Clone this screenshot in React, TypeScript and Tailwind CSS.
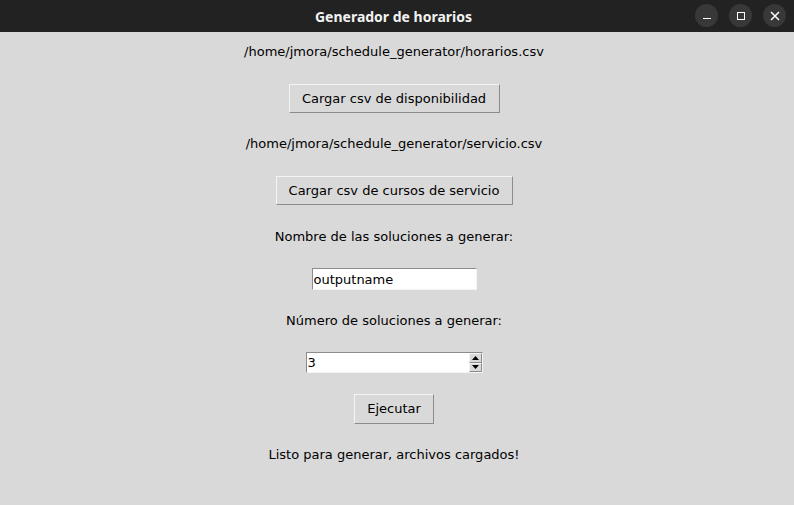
import { useState } from 'react';

const font = { fontFamily: '"DejaVu Sans", sans-serif' };

function TkButton({ label, width }: { label: string; width: string }) {
  return (
    <button
      type="button"
      className={`${width} h-[29px] border border-t-[#f4f4f4] border-l-[#f4f4f4] border-b-[#8c8c8c] border-r-[#8c8c8c] bg-[#d9d9d9] text-[13px] text-black`}
    >
      {label}
    </button>
  );
}

function Label({ text }: { text: string }) {
  return <p className="h-[20px] text-[13px] leading-[20px] text-black">{text}</p>;
}

export default function App() {
  const [name, setName] = useState('outputname');
  const [count, setCount] = useState(3);

  return (
    <div className="flex h-[505px] w-[794px] flex-col bg-[#d9d9d9]" style={font}>
      <div className="relative flex h-[32px] shrink-0 items-center justify-center bg-[#222222] pr-[7px]">
        <span
          className="text-[14px] font-bold text-[#f2f2f2]"
          style={{ fontFamily: '"Noto Sans", sans-serif' }}
        >
          Generador de horarios
        </span>
        <div className="absolute right-[8px] top-[4px] flex gap-[11px]">
          <div className="flex h-[23px] w-[23px] items-center justify-center rounded-full bg-[#383838]">
            <div className="mt-[6px] h-[1.5px] w-[8px] bg-white" />
          </div>
          <div className="flex h-[23px] w-[23px] items-center justify-center rounded-full bg-[#383838]">
            <div className="h-[8px] w-[8px] border border-white" />
          </div>
          <div className="flex h-[23px] w-[23px] items-center justify-center rounded-full bg-[#383838]">
            <svg width="10" height="10" viewBox="0 0 10 10">
              <path d="M1 1L9 9M9 1L1 9" stroke="white" strokeWidth="1.5" />
            </svg>
          </div>
        </div>
      </div>

      <div className="flex flex-col items-center pr-[6px]">
        <div className="mt-[10px]">
          <Label text="/home/jmora/schedule_generator/horarios.csv" />
        </div>
        <div className="mt-[22px]">
          <TkButton label="Cargar csv de disponibilidad" width="w-[211px]" />
        </div>
        <div className="mt-[21px]">
          <Label text="/home/jmora/schedule_generator/servicio.csv" />
        </div>
        <div className="mt-[22px]">
          <TkButton label="Cargar csv de cursos de servicio" width="w-[237px]" />
        </div>
        <div className="mt-[22px]">
          <Label text="Nombre de las soluciones a generar:" />
        </div>
        <input
          value={name}
          onChange={(e) => setName(e.target.value)}
          className="mt-[21px] h-[22px] w-[165px] border border-t-[#8c8c8c] border-l-[#8c8c8c] border-b-[#f4f4f4] border-r-[#f4f4f4] bg-white px-[1px] text-[13px] text-black outline-none"
        />
        <div className="mt-[21px]">
          <Label text="Número de soluciones a generar:" />
        </div>
        <div className="mt-[21px] flex h-[21px] w-[177px] items-stretch border border-t-[#8c8c8c] border-l-[#8c8c8c] border-b-[#f4f4f4] border-r-[#f4f4f4] bg-white">
          <input
            value={count}
            onChange={(e) => setCount(Number(e.target.value) || 0)}
            className="min-w-0 flex-1 bg-white px-[1px] text-[13px] text-black outline-none"
          />
          <div className="flex w-[13px] flex-col">
            <button
              type="button"
              onClick={() => setCount((c) => c + 1)}
              className="flex flex-1 items-center justify-center border border-t-[#f4f4f4] border-l-[#f4f4f4] border-b-[#8c8c8c] border-r-[#8c8c8c] bg-[#d9d9d9]"
            >
              <svg width="7" height="4" viewBox="0 0 7 4">
                <path d="M3.5 0L7 4H0Z" fill="black" />
              </svg>
            </button>
            <button
              type="button"
              onClick={() => setCount((c) => c - 1)}
              className="flex flex-1 items-center justify-center border border-t-[#f4f4f4] border-l-[#f4f4f4] border-b-[#8c8c8c] border-r-[#8c8c8c] bg-[#d9d9d9]"
            >
              <svg width="7" height="4" viewBox="0 0 7 4">
                <path d="M0 0H7L3.5 4Z" fill="black" />
              </svg>
            </button>
          </div>
        </div>
        <div className="mt-[21px]">
          <button
            type="button"
            className="h-[30px] w-[80px] border border-t-[#f4f4f4] border-l-[#f4f4f4] border-b-[#8c8c8c] border-r-[#8c8c8c] bg-[#d9d9d9] text-[13px] text-black"
          >
            Ejecutar
          </button>
        </div>
        <div className="mt-[21px]">
          <Label text="Listo para generar, archivos cargados!" />
        </div>
      </div>
    </div>
  );
}
